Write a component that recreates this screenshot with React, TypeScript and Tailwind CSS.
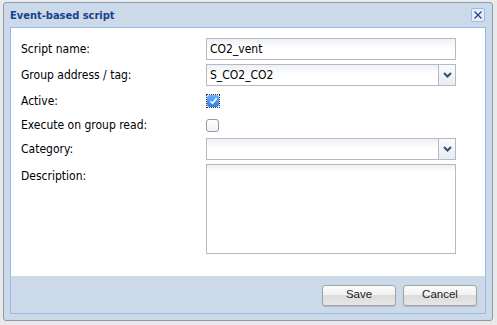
import React from 'react';

const LABEL_FONT = { fontFamily: '"DejaVu Sans Condensed", "DejaVu Sans", sans-serif' };

const Trigger = () => (
  <div className="w-[17px] h-full border-l border-[#b5b8c8] bg-gradient-to-b from-[#fbfbfb] to-[#e9ecf0] flex items-center justify-center">
    <svg width="9" height="6" viewBox="0 0 9 6">
      <path d="M1 1 L4.5 4.5 L8 1" fill="none" stroke="#2b4f8c" strokeWidth="2" />
    </svg>
  </div>
);

const TextField = ({ value, combo }: { value: string; combo?: boolean }) => (
  <div className="w-[250px] h-[22px] border border-[#b5b8c8] bg-gradient-to-b from-[#eef0f2] via-white to-white flex items-stretch">
    <div className="flex-1 flex items-center pl-[3px] text-[12px] text-black leading-none" style={LABEL_FONT}>
      {value}
    </div>
    {combo && <Trigger />}
  </div>
);

const Checkbox = ({ checked }: { checked?: boolean }) =>
  checked ? (
    <div className="w-[14px] h-[14px] border border-dotted border-[#333] flex items-center justify-center">
      <div className="w-[12px] h-[12px] rounded-[3px] bg-gradient-to-b from-[#6cb3fa] to-[#2a7de9] flex items-center justify-center">
        <svg width="9" height="8" viewBox="0 0 9 8">
          <path d="M1.5 4.2 L3.6 6.3 L7.6 1.3" fill="none" stroke="white" strokeWidth="1.6" />
        </svg>
      </div>
    </div>
  ) : (
    <div className="w-[13px] h-[13px] rounded-[3px] border border-[#9a9a9a] bg-gradient-to-b from-white to-[#f2f2f2]" />
  );

const Row = ({ label, h, children, top }: { label: string; h: string; children: React.ReactNode; top?: boolean }) => (
  <div className={'flex ' + h + (top ? ' items-start' : ' items-center')}>
    <div className={'w-[185px] text-[12px] text-black leading-none' + (top ? ' pt-[6px]' : '')} style={LABEL_FONT}>
      {label}
    </div>
    {children}
  </div>
);

const Button = ({ text }: { text: string }) => (
  <div
    className="w-[74px] h-[21px] rounded-[3px] border border-[#a3a3a3] bg-[linear-gradient(#fafafa_0%,#f1f1f1_50%,#dcdcdc_50%,#e6e6e6_100%)] flex items-center justify-center text-[11.5px] text-[#222] shadow-[0_1px_1px_rgba(0,0,0,0.15)]"
    style={{ fontFamily: '"Liberation Sans", Arial, sans-serif' }}
  >
    {text}
  </div>
);

export default function App() {
  return (
    <div className="w-[497px] h-[325px] bg-[#e9e9e9] pt-[2px] pl-[3px] overflow-hidden">
      <div className="w-[490px] h-[319px] rounded-[3px] border border-[#8a9bb3] bg-[#cbd9e9] flex flex-col px-[6px] pb-[6px]">
        <div className="h-[24px] flex items-center justify-between">
          <span
            className="text-[11px] font-bold text-[#15428b] leading-none pt-[1px]"
            style={LABEL_FONT}
          >
            Event-based script
          </span>
          <div className="w-[14px] h-[14px] mr-[1px] rounded-[2px] border border-[#99bbe8] bg-[#e8eff8] flex items-center justify-center">
            <svg width="8" height="8" viewBox="0 0 8 8">
              <path d="M0.5 0.5 L7.5 7.5 M7.5 0.5 L0.5 7.5" stroke="#15428b" strokeWidth="1.2" />
            </svg>
          </div>
        </div>
        <div className="flex-1 border border-[#99bbe8] flex flex-col">
          <div className="h-[248px] bg-white pl-[10px] pt-[10px] flex flex-col gap-[4px]">
            <Row label="Script name:" h="h-[22px]">
              <TextField value="CO2_vent" />
            </Row>
            <Row label="Group address / tag:" h="h-[22px]">
              <TextField value="S_CO2_CO2" combo />
            </Row>
            <Row label="Active:" h="h-[22px]">
              <Checkbox checked />
            </Row>
            <Row label="Execute on group read:" h="h-[18px]">
              <Checkbox />
            </Row>
            <Row label="Category:" h="h-[22px]">
              <TextField value="" combo />
            </Row>
            <Row label="Description:" h="h-[90px]" top>
              <div className="w-[250px] h-[90px] border border-[#b5b8c8] bg-gradient-to-b from-[#eef0f2] to-white to-[8%]" />
            </Row>
          </div>
          <div className="flex-1 flex items-center justify-end gap-[7px] pr-[8px] pt-[1px]">
            <Button text="Save" />
            <Button text="Cancel" />
          </div>
        </div>
      </div>
    </div>
  );
}
